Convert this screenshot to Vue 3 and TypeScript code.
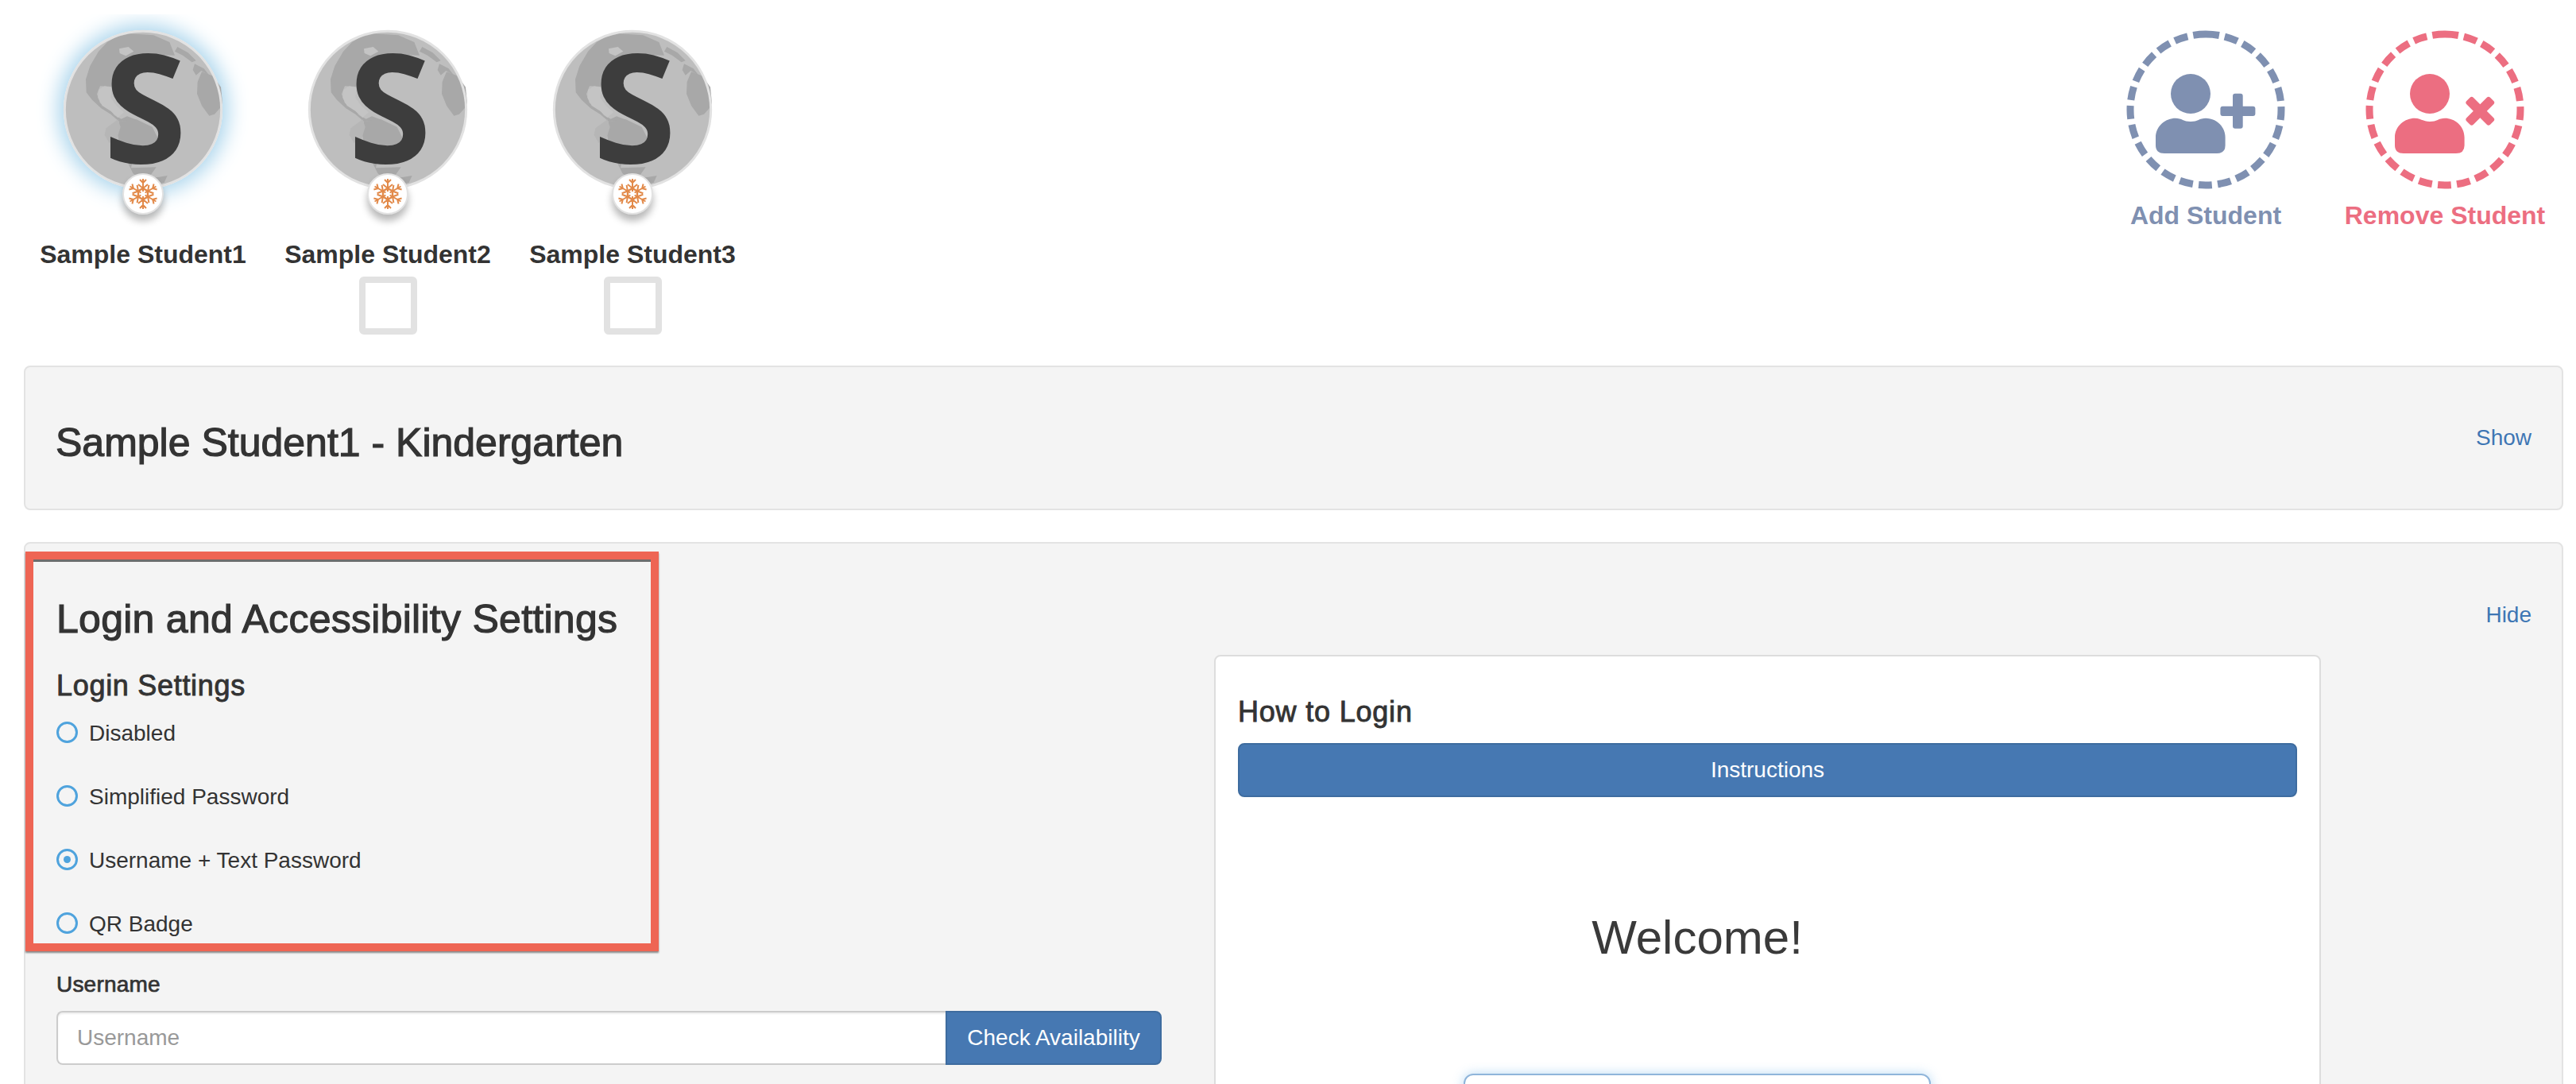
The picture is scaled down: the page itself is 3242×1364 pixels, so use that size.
<script setup lang="ts">
const students: { name: string; active: boolean }[] = [
  { name: 'Sample Student1', active: true },
  { name: 'Sample Student2', active: false },
  { name: 'Sample Student3', active: false },
]
const loginOptions: { label: string; checked: boolean }[] = [
  { label: 'Disabled', checked: false },
  { label: 'Simplified Password', checked: false },
  { label: 'Username + Text Password', checked: true },
  { label: 'QR Badge', checked: false },
]
const arms: number[] = [0, 60, 120, 180, 240, 300]
</script>

<template>
  <div class="page">
    <header class="top">
      <div class="students">
        <div v-for="s in students" :key="s.name" class="student">
          <div class="avatar" :class="{ glow: s.active }">
            <svg class="globe" viewBox="90 55 600 600">
              <circle cx="390" cy="355" r="296" fill="#bebebe" />
              <path class="land" d="M285 82 L340 68 L430 74 L490 100 L510 150 L440 148 L370 165 L320 190 L285 230 L272 268 L228 266 L216 296 L228 330 L262 350 L282 376 L308 390 L330 380 L370 395 L300 400 L268 372 L232 350 L198 318 L176 290 L174 240 L190 190 L222 135 L255 100 Z" />
              <path class="land" d="M300 400 L365 392 L425 420 L446 462 L428 500 L385 510 L350 550 L345 575 L440 572 L420 600 L372 612 L352 595 L325 540 L298 470 L290 430 Z" />
              <path class="land" d="M690 330 L684 270 L655 228 L612 212 L596 250 L594 295 L612 340 L640 378 L660 372 L680 350 Z" />
              <path class="land" d="M520 118 L560 140 L590 170 L575 176 L540 150 L510 135 Z M585 182 L620 200 L640 225 L610 208 L590 225 L578 205 Z M432 612 L482 604 L470 630 L420 642 Z" />
              <path class="lake" d="M300 125 L335 118 L355 135 L325 152 L302 142 Z M222 280 L245 266 L272 272 L268 310 L290 340 L318 365 L295 385 L268 360 L236 340 L220 310 Z" />
              <path class="soft" d="M250 425 L295 392 L305 420 L290 470 L262 480 L245 450 Z" />
              <circle cx="390" cy="355" r="296" fill="none" stroke="#e2e2e2" stroke-width="9" />
              <text class="letter" x="398" y="557" text-anchor="middle">S</text>
            </svg>
            <div class="badge">
              <svg class="flake" viewBox="-20 -20 40 40">
                <g v-for="a in arms" :key="a" :transform="`rotate(${a})`">
                  <path d="M0 -3V-19M-4 -18L0 -14L4 -18M-6 -12L0 -7L6 -12" />
                </g>
                <polygon points="0,-7 6,-3.5 6,3.5 0,7 -6,3.5 -6,-3.5" />
              </svg>
            </div>
          </div>
          <div class="student-name">{{ s.name }}</div>
          <div v-if="!s.active" class="check"></div>
        </div>
      </div>
      <div class="actions">
        <div class="action add">
          <svg class="action-icon" viewBox="0 0 200 200">
            <circle class="dash" cx="100" cy="100" r="95" transform="rotate(-90 100 100)" />
            <ellipse class="fill" cx="81" cy="80" rx="25" ry="25" />
            <path class="fill" d="M37 145V135C37 120 50 110.7 62 110.7C70 110.7 72 115 81 115C90 115 92 110.7 100 110.7C112 110.7 124.6 120 124.6 135V145Q124.6 155 114 155H48Q37 155 37 145Z" />
            <rect class="fill" x="118.4" y="95.7" width="44" height="12.4" rx="3" />
            <rect class="fill" x="134" y="79.7" width="12.7" height="44" rx="3" />
          </svg>
          <div class="action-label">Add Student</div>
        </div>
        <div class="action remove">
          <svg class="action-icon" viewBox="0 0 200 200">
            <circle class="dash" cx="100" cy="100" r="95" transform="rotate(-90 100 100)" />
            <ellipse class="fill" cx="81" cy="80" rx="25" ry="25" />
            <path class="fill" d="M37 145V135C37 120 50 110.7 62 110.7C70 110.7 72 115 81 115C90 115 92 110.7 100 110.7C112 110.7 124.6 120 124.6 135V145Q124.6 155 114 155H48Q37 155 37 145Z" />
            <g transform="translate(144.3 101.7) rotate(45)">
              <rect class="fill" x="-6" y="-21" width="12" height="42" rx="3" />
              <rect class="fill" x="-21" y="-6" width="42" height="12" rx="3" />
            </g>
          </svg>
          <div class="action-label">Remove Student</div>
        </div>
      </div>
    </header>

    <section class="panel panel-student">
      <h3 class="title student-title">Sample Student1 - Kindergarten</h3>
      <a class="link">Show</a>
    </section>

    <section class="panel panel-login">
      <div class="left">
        <div class="highlight">
          <h3 class="title login-title">Login and Accessibility Settings</h3>
          <h4 class="subtitle">Login Settings</h4>
          <div v-for="o in loginOptions" :key="o.label" class="radio-row">
            <span class="radio" :class="{ on: o.checked }"></span>
            <span class="radio-text">{{ o.label }}</span>
          </div>
        </div>
        <label class="field-label">Username</label>
        <div class="input-row">
          <input class="input" type="text" placeholder="Username" />
          <button class="btn addon">Check Availability</button>
        </div>
      </div>
      <div class="right">
        <div class="hide-row"><a class="link">Hide</a></div>
        <div class="card">
          <h4 class="subtitle how">How to Login</h4>
          <button class="btn wide">Instructions</button>
          <div class="welcome">Welcome!</div>
          <div class="login-box"></div>
        </div>
      </div>
    </section>
  </div>
</template>

<style scoped>
.page {
  height: 1364px;
  overflow: hidden;
  background: #fff;
  color: #333;
  font-family: "Liberation Sans", Arial, sans-serif;
  font-size: 28px;
}
.top {
  height: 460px;
  box-sizing: border-box;
  padding: 38px 15px 0 26px;
  display: flex;
  justify-content: space-between;
  align-items: flex-start;
}
.students { display: flex; }
.student {
  width: 308px;
  display: flex;
  flex-direction: column;
  align-items: center;
}
.avatar {
  position: relative;
  width: 200px;
  height: 200px;
  border-radius: 50%;
}
.avatar.glow {
  box-shadow: 0 0 26px 7px #a9d4ec;
  clip-path: inset(-20px -60px -60px -60px);
}
.globe { display: block; width: 200px; height: 200px; overflow: visible; }
.land { fill: #a8a8a8; }
.lake { fill: #c4c4c4; }
.soft { fill: #b6b6b6; }
.letter {
  font-family: "Open Sans", sans-serif;
  font-weight: 700;
  font-size: 570px;
  fill: #3d3d3d;
  filter: blur(1.5px);
}
.badge {
  position: absolute;
  left: 50%;
  top: 180px;
  width: 52px;
  height: 52px;
  margin-left: -26px;
  box-sizing: border-box;
  border: 2px solid #e2e2e2;
  border-radius: 50%;
  background: #fff;
  box-shadow: 0 8px 10px rgba(0, 0, 0, 0.28);
  display: flex;
  align-items: center;
  justify-content: center;
}
.flake { width: 40px; height: 40px; }
.flake path { fill: none; stroke: #e28a4a; stroke-width: 2; }
.flake polygon { fill: none; stroke: #e28a4a; stroke-width: 2.4; }
.student-name {
  margin-top: 64px;
  font-size: 32px;
  line-height: 36px;
  font-weight: 700;
  white-space: nowrap;
}
.check {
  margin-top: 10px;
  width: 73px;
  height: 73px;
  box-sizing: border-box;
  border: 8px solid #e2e2e2;
  border-radius: 6px;
}
.actions { display: flex; gap: 1px; }
.action {
  width: 300px;
  display: flex;
  flex-direction: column;
  align-items: center;
}
.action-icon { display: block; width: 200px; height: 200px; }
.action-label {
  margin-top: 15px;
  font-size: 32px;
  line-height: 36px;
  font-weight: 700;
  white-space: nowrap;
}
.dash {
  fill: none;
  stroke-width: 9;
  stroke-dasharray: 17 7.17;
}
.add { color: #7f90b1; }
.remove { color: #ec6e81; }
.action .dash { stroke: currentColor; }
.action .fill { fill: currentColor; }

.panel {
  margin: 0 16px 0 30px;
  background: #f4f4f4;
  border: 2px solid #e3e3e3;
  border-radius: 8px;
}
.panel-student {
  height: 182px;
  box-sizing: border-box;
  padding: 0 38px;
  display: flex;
  justify-content: space-between;
  align-items: center;
}
.panel-login {
  margin-top: 40px;
  display: flex;
  align-items: flex-start;
  height: 800px;
  box-sizing: border-box;
}
.title {
  margin: 0;
  font-size: 50px;
  line-height: 55px;
  font-weight: 400;
  -webkit-text-stroke: 1.2px #333;
}
.student-title { padding-top: 12px; }
.login-title { letter-spacing: 0.27px; }
.subtitle {
  margin: 38px 0 0;
  font-size: 36px;
  line-height: 36px;
  font-weight: 400;
  letter-spacing: 0.7px;
  -webkit-text-stroke: 0.9px #333;
}
.link { color: #3e76b4; font-size: 28px; line-height: 40px; }
.left {
  width: 1496px;
  flex: none;
  padding-top: 10px;
}
.highlight {
  width: 797px;
  height: 503px;
  box-sizing: border-box;
  overflow: hidden;
  padding: 48px 29px 0;
  border: 10px solid #ee6554;
  box-shadow: inset 0 3px 0 #6d6d6d, 0 2px 2px rgba(0, 0, 0, 0.45);
}
.radio-row {
  height: 80px;
  display: flex;
  align-items: center;
  gap: 14px;
  white-space: nowrap;
}
.radio-text { padding-top: 4px; }
.radio {
  width: 27px;
  height: 27px;
  box-sizing: border-box;
  border: 3px solid #4fa3dd;
  border-radius: 50%;
  flex: none;
  display: flex;
  align-items: center;
  justify-content: center;
}
.radio.on::after {
  content: "";
  width: 9px;
  height: 9px;
  border-radius: 50%;
  background: #4fa3dd;
}
.field-label {
  display: block;
  margin: 22px 0 0 39px;
  line-height: 40px;
  -webkit-text-stroke: 0.7px #333;
  letter-spacing: 0.2px;
}
.input-row {
  display: flex;
  margin: 13px 0 0 39px;
  width: 1391px;
  height: 68px;
}
.input {
  flex: 1;
  min-width: 0;
  box-sizing: border-box;
  padding: 0 24px;
  border: 2px solid #ccc;
  border-right: 0;
  border-radius: 8px 0 0 8px;
  background: #fff;
  box-shadow: inset 0 2px 2px rgba(0, 0, 0, 0.07);
  font: 28px "Liberation Sans", Arial, sans-serif;
  color: #555;
  outline: none;
}
.input::placeholder { color: #999; opacity: 1; }
.btn {
  box-sizing: border-box;
  height: 68px;
  border: 2px solid #3e6c9f;
  background: #4678b2;
  color: #fff;
  font: 28px "Liberation Sans", Arial, sans-serif;
  padding: 0;
}
.addon { width: 272px; border-radius: 0 8px 8px 0; }
.wide { display: block; width: 100%; border-radius: 8px; margin-top: 19px; }
.right { flex: 1; min-width: 0; }
.hide-row {
  padding: 70px 38px 0 0;
  display: flex;
  justify-content: flex-end;
  height: 38px;
}
.card {
  margin-top: 32px;
  width: 1393px;
  height: 700px;
  box-sizing: border-box;
  padding: 50px 28px 0;
  background: #fff;
  border: 2px solid #ddd;
  border-radius: 8px;
}
.how { margin-top: 0; line-height: 40px; letter-spacing: 0.8px; }
.welcome {
  width: 1156px;
  margin-top: 144px;
  text-align: center;
  font-size: 60px;
  line-height: 66px;
  color: #3a3a3a;
  filter: blur(0.4px);
}
.login-box {
  margin: 138px 0 0 284px;
  width: 588px;
  height: 120px;
  box-sizing: border-box;
  border: 2px solid #8fb5da;
  border-radius: 12px;
  box-shadow: 0 0 14px rgba(102, 175, 233, 0.45);
}
</style>

<style>
html, body { margin: 0; overflow: hidden; background: #fff; }
</style>
